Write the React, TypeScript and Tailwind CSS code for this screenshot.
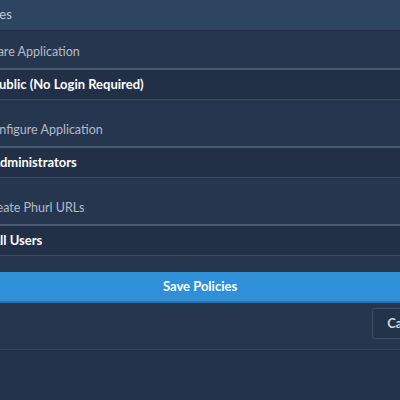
// Policies panel: cropped modal view
const FIELDS = [
  { label: "Share Application", value: "Public (No Login Required)" },
  { label: "Configure Application", value: "Administrators" },
  { label: "Create Phurl URLs", value: "All Users" },
];

function PolicySelect({ label, value }: { label: string; value: string }) {
  return (
    <div>
      <div className="mb-[8px] h-[16px] text-[12.5px] leading-[16px] text-[#b4bcc8]">{label}</div>
      <div className="flex h-[32px] items-center border-t-2 border-b border-t-[#4a5a6e] border-b-[#3a4a5e] bg-[#213047] pl-[7px] text-[13px] font-bold text-white">
        {value}
      </div>
    </div>
  );
}

export default function App() {
  return (
    <div
      className="h-[400px] w-[400px] overflow-hidden bg-[#22324a]"
      style={{ fontFamily: "Lato, 'Open Sans', sans-serif" }}
    >
      <div className="-ml-[30px] w-[460px]">
        {/* Header */}
        <div className="flex h-[31px] items-center border-b border-[#1f2e44] bg-[#2e4562] px-[14px]">
          <span className="-ml-[15px] text-[13px] text-[#c3cad4]">Policies</span>
        </div>

        {/* Body */}
        <div className="border-b border-[#30415b] bg-[#26364f] px-[14px] pt-[13px] pb-[10px]">
          <div className="flex flex-col gap-[22px]">
            {FIELDS.map((f) => (
              <PolicySelect key={f.label} label={f.label} value={f.value} />
            ))}
          </div>

          <button className="mt-[16px] flex h-[31px] w-full items-center justify-center border-b-2 border-[#2673b0] bg-[#2f90d8] text-[13px] font-bold text-white">
            Save Policies
          </button>

          <div className="-mr-[25px] mt-[5px] flex justify-end">
            <button className="h-[31px] rounded-[3px] border border-[#3d4d62] bg-[#233349] px-[14px] text-[13px] font-bold text-[#d0d6de]">
              Cancel
            </button>
          </div>
        </div>
      </div>
    </div>
  );
}
